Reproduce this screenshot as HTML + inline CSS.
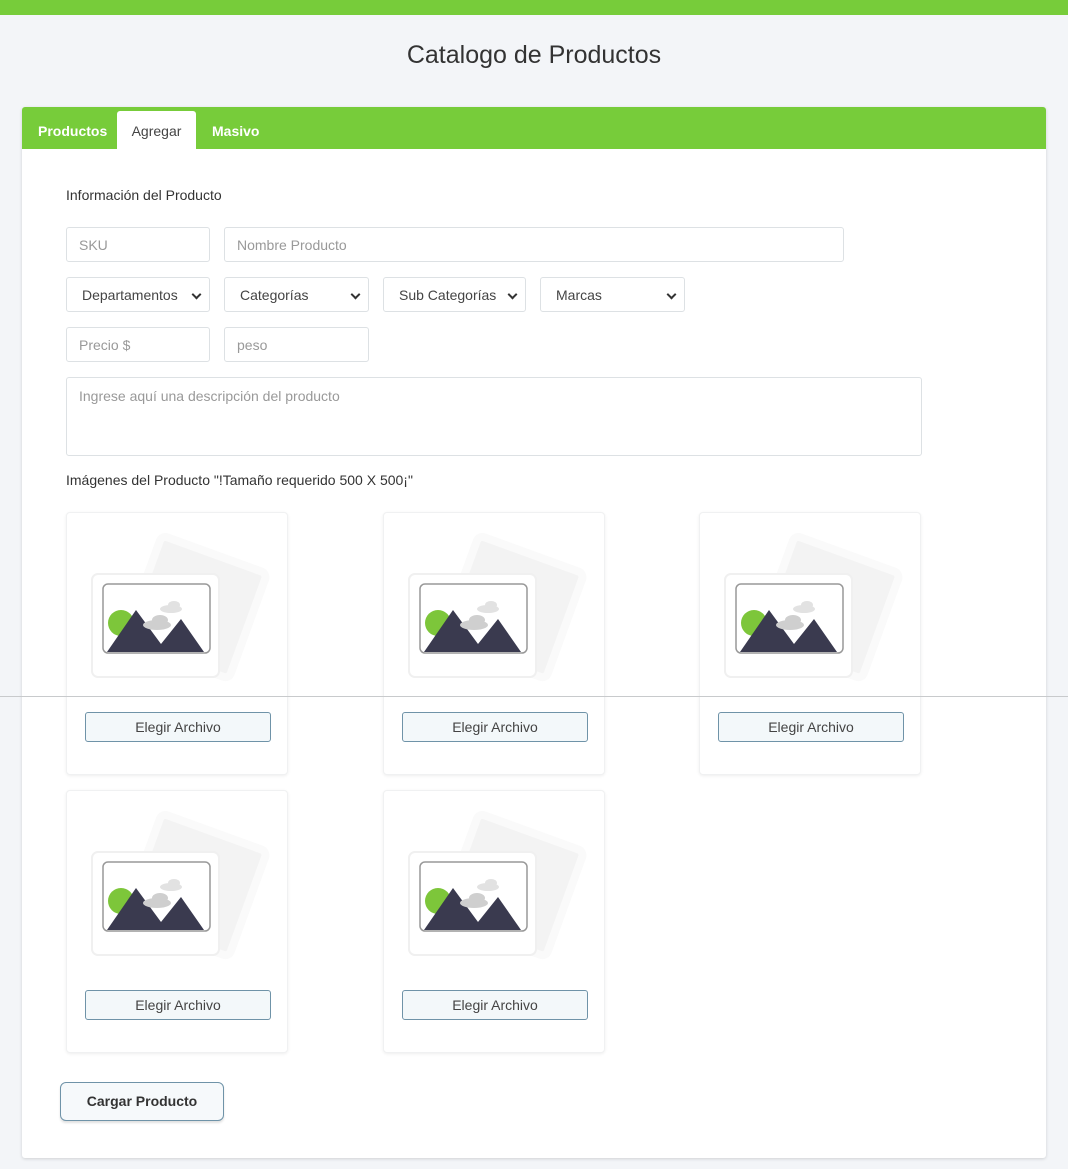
<!DOCTYPE html>
<html><head><meta charset="utf-8"><style>
*{box-sizing:border-box;margin:0;padding:0}
body{width:1068px;height:1169px;background:#f3f5f8;font-family:"Liberation Sans",sans-serif;position:relative;overflow:hidden;color:#333}
.abs{position:absolute}
.inp{position:absolute;background:#fff;border:1px solid #dde1e4;border-radius:3px;font-size:14px;color:#999;padding-left:12px;display:flex;align-items:center;height:35px}
.sel{color:#444;padding-left:15px}
.sel:after{content:"";position:absolute;right:9px;top:13px;width:5px;height:5px;border-right:2px solid #333;border-bottom:2px solid #333;transform:rotate(45deg)}
.card{position:absolute;width:222px;height:263px;background:#fff;border:1px solid #f0f1f2;border-radius:4px;box-shadow:0 1px 3px rgba(0,0,0,.07)}
.card svg{position:absolute;left:0;top:0}
.btn{position:absolute;left:18px;top:199px;width:186px;height:30px;border:1px solid #6f93a8;border-radius:3px;background:#f3f8fa;font-size:14px;color:#444;text-align:center;line-height:28px}
</style></head><body>
<div class="abs" style="left:0;top:0;width:1068px;height:15px;background:#77cc3a"></div>
<div class="abs" style="left:0;top:41px;width:1068px;text-align:center;font-size:25px;color:#333">Catalogo de Productos</div>
<div class="abs" style="left:22px;top:107px;width:1024px;height:1051px;background:#fff;border-radius:3px;box-shadow:0 1px 3px rgba(0,0,0,.15)"></div>
<div class="abs" style="left:22px;top:107px;width:1024px;height:42px;background:#77cc3a;border-radius:3px 3px 0 0"></div>
<div class="abs" style="left:38px;top:123px;font-size:14px;color:#fff;font-weight:bold">Productos</div>
<div class="abs" style="left:117px;top:111px;width:79px;height:38px;background:#fff;border-radius:3px 3px 0 0;font-size:14px;color:#444;text-align:center;line-height:40px">Agregar</div>
<div class="abs" style="left:212px;top:123px;font-size:14px;color:#fff;font-weight:bold">Masivo</div>
<div class="abs" style="left:66px;top:187px;font-size:14px;color:#333">Información del Producto</div>
<div class="inp" style="left:66px;top:227px;width:144px">SKU</div>
<div class="inp" style="left:224px;top:227px;width:620px">Nombre Producto</div>
<div class="inp sel" style="left:66px;top:277px;width:144px">Departamentos</div>
<div class="inp sel" style="left:224px;top:277px;width:145px">Categorías</div>
<div class="inp sel" style="left:383px;top:277px;width:143px">Sub Categorías</div>
<div class="inp sel" style="left:540px;top:277px;width:145px">Marcas</div>
<div class="inp" style="left:66px;top:327px;width:144px">Precio $</div>
<div class="inp" style="left:224px;top:327px;width:145px">peso</div>
<div class="inp" style="left:66px;top:377px;width:856px;height:79px;align-items:flex-start;padding-top:10px">Ingrese aquí una descripción del producto</div>
<div class="abs" style="left:66px;top:472px;font-size:14px;color:#333">Imágenes del Producto "!Tamaño requerido 500 X 500¡"</div>

<svg width="0" height="0" style="position:absolute"><defs>
<g id="ic">
<g transform="rotate(20 128 95)"><rect x="72" y="38" width="112" height="112" rx="6" fill="#f3f3f3" stroke="#fafafa" stroke-width="8"/></g>
<rect x="25" y="61" width="127" height="103" rx="6" fill="#fff" stroke="#f0f0f0" stroke-width="2"/>
<rect x="36" y="71" width="107" height="69" rx="5" fill="#fff" stroke="#999" stroke-width="1.5"/>
<circle cx="54" cy="110" r="13" fill="#7dc63a"/>
<path d="M40 139 L69 97 L94 131 L114 106 L137 139 Z" fill="#3a3a4f"/>
<ellipse cx="90" cy="112" rx="14" ry="5" fill="#cfcfcf"/><ellipse cx="93" cy="107" rx="8" ry="5" fill="#cfcfcf"/>
<ellipse cx="104" cy="96" rx="11" ry="4" fill="#e2e2e2"/><ellipse cx="107" cy="92" rx="6" ry="4" fill="#e2e2e2"/>
</g></defs></svg>

<div class="card" style="left:66px;top:512px"><svg width="222" height="263"><use href="#ic"/></svg><div class="btn">Elegir Archivo</div></div>
<div class="card" style="left:383px;top:512px"><svg width="222" height="263"><use href="#ic"/></svg><div class="btn">Elegir Archivo</div></div>
<div class="card" style="left:699px;top:512px"><svg width="222" height="263"><use href="#ic"/></svg><div class="btn">Elegir Archivo</div></div>
<div class="card" style="left:66px;top:790px"><svg width="222" height="263"><use href="#ic"/></svg><div class="btn">Elegir Archivo</div></div>
<div class="card" style="left:383px;top:790px"><svg width="222" height="263"><use href="#ic"/></svg><div class="btn">Elegir Archivo</div></div>

<div class="abs" style="left:0;top:696px;width:1068px;height:1px;background:#c8cacc"></div>
<div class="abs" style="left:60px;top:1082px;width:164px;height:39px;border:1px solid #6f93a8;border-radius:6px;background:#f6f9fb;box-shadow:0 2px 2px rgba(0,0,0,.12);font-size:14px;font-weight:bold;color:#333;text-align:center;line-height:37px">Cargar Producto</div>
</body></html>
